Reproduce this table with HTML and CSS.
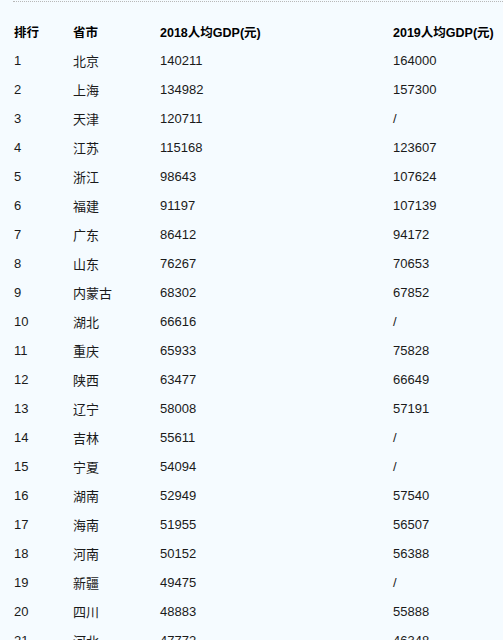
FILE: index.html
```html
<!DOCTYPE html>
<html lang="zh">
<head>
<meta charset="utf-8">
<link rel="stylesheet" href="styles.css">
</head>
<body>
<div class="wrap">
  <table class="gdp">
    <colgroup>
      <col class="c1"><col class="c2"><col class="c3"><col class="c4">
    </colgroup>
    <thead>
      <tr><th>排行</th><th>省市</th><th>2018人均GDP(元)</th><th>2019人均GDP(元)</th></tr>
    </thead>
    <tbody>
      <tr><td>1</td><td>北京</td><td>140211</td><td>164000</td></tr>
      <tr><td>2</td><td>上海</td><td>134982</td><td>157300</td></tr>
      <tr><td>3</td><td>天津</td><td>120711</td><td>/</td></tr>
      <tr><td>4</td><td>江苏</td><td>115168</td><td>123607</td></tr>
      <tr><td>5</td><td>浙江</td><td>98643</td><td>107624</td></tr>
      <tr><td>6</td><td>福建</td><td>91197</td><td>107139</td></tr>
      <tr><td>7</td><td>广东</td><td>86412</td><td>94172</td></tr>
      <tr><td>8</td><td>山东</td><td>76267</td><td>70653</td></tr>
      <tr><td>9</td><td>内蒙古</td><td>68302</td><td>67852</td></tr>
      <tr><td>10</td><td>湖北</td><td>66616</td><td>/</td></tr>
      <tr><td>11</td><td>重庆</td><td>65933</td><td>75828</td></tr>
      <tr><td>12</td><td>陕西</td><td>63477</td><td>66649</td></tr>
      <tr><td>13</td><td>辽宁</td><td>58008</td><td>57191</td></tr>
      <tr><td>14</td><td>吉林</td><td>55611</td><td>/</td></tr>
      <tr><td>15</td><td>宁夏</td><td>54094</td><td>/</td></tr>
      <tr><td>16</td><td>湖南</td><td>52949</td><td>57540</td></tr>
      <tr><td>17</td><td>海南</td><td>51955</td><td>56507</td></tr>
      <tr><td>18</td><td>河南</td><td>50152</td><td>56388</td></tr>
      <tr><td>19</td><td>新疆</td><td>49475</td><td>/</td></tr>
      <tr><td>20</td><td>四川</td><td>48883</td><td>55888</td></tr>
      <tr><td>21</td><td>河北</td><td>47772</td><td>46348</td></tr>
    </tbody>
  </table>
</div>
</body>
</html>
```
FILE: styles.css
```css
html, body {
  margin: 0;
  padding: 0;
  background: #f5fbff;
}
body {
  font-family: "Liberation Sans", "Noto Sans CJK SC", sans-serif;
  font-size: 13px;
  color: #1a1a1a;
}
.wrap {
  margin-top: 1px;
  margin-left: 13px;
  border-top: 1px dotted #b8b8b8;
  padding-top: 15px;
}
.gdp {
  border-collapse: collapse;
  table-layout: fixed;
  width: 490px;
}
.c1 { width: 59px; }
.c2 { width: 87px; }
.c3 { width: 233px; }
.c4 { width: 111px; }
.gdp th, .gdp td {
  height: 29px;
  padding: 0 0 0 1px;
  text-align: left;
  vertical-align: middle;
  white-space: nowrap;
}
.gdp th {
  font-size: 12.5px;
  font-weight: bold;
  color: #000;
}
```
